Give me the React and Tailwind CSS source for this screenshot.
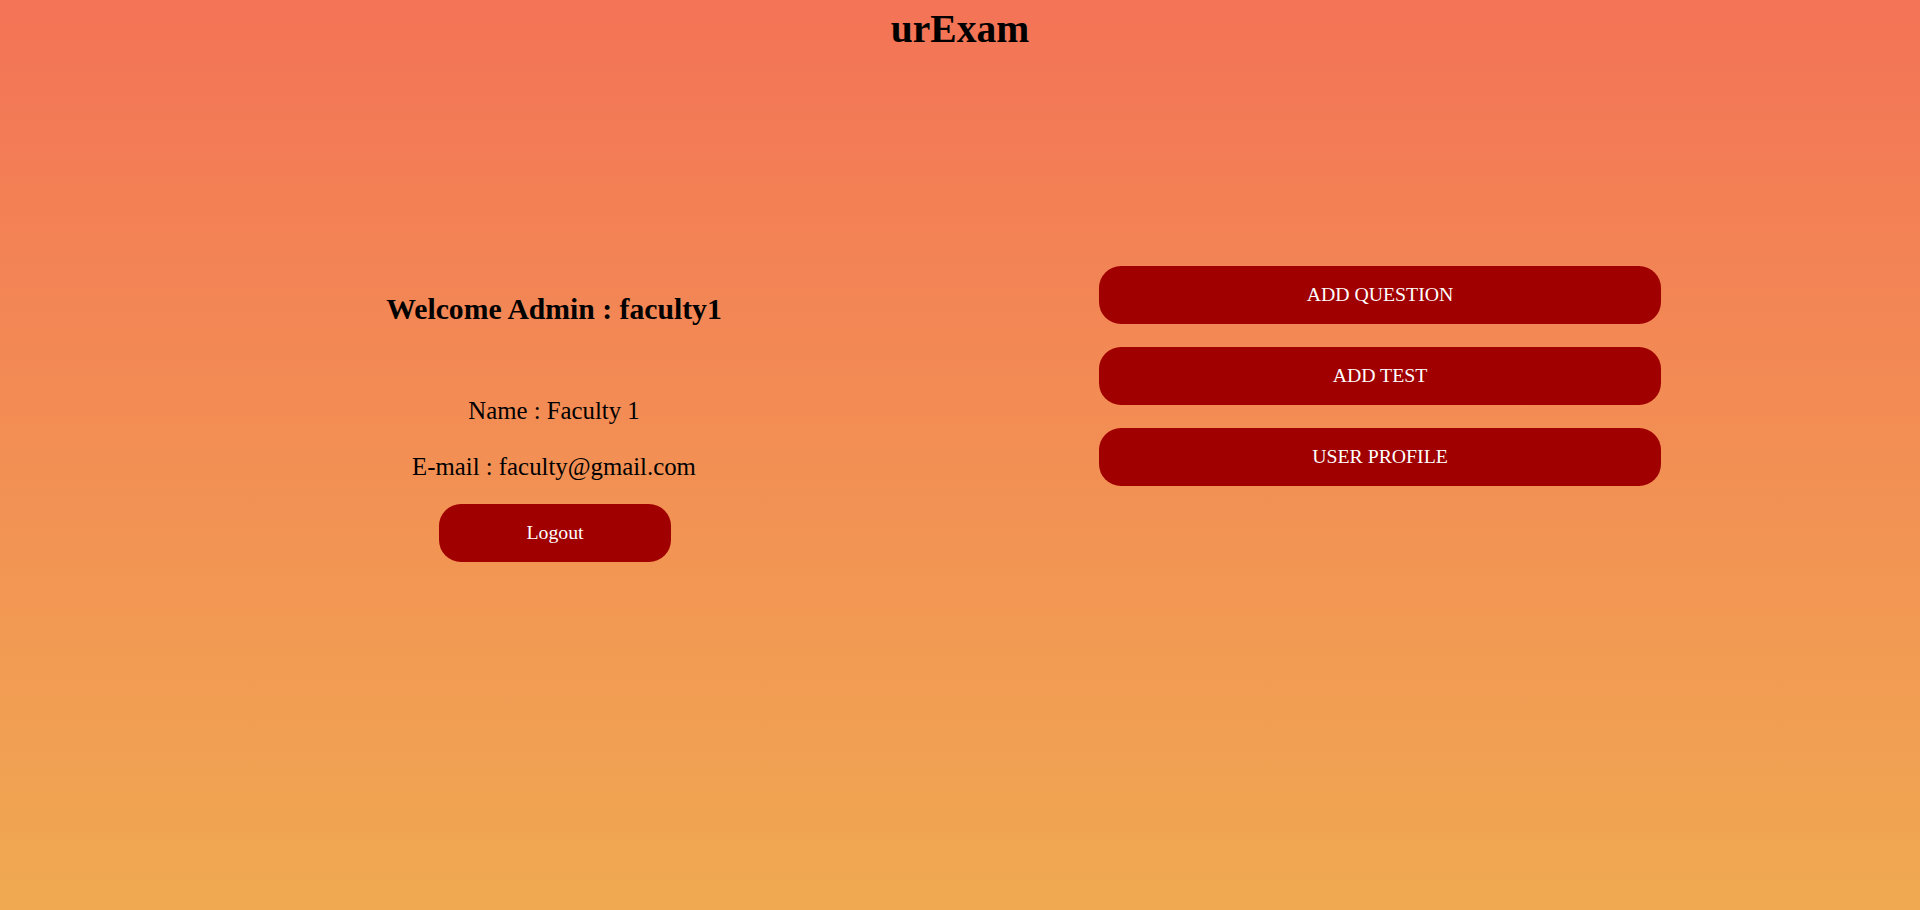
const ACTIONS = ['ADD QUESTION', 'ADD TEST', 'USER PROFILE'];

function PillButton({ children, className = '' }) {
  return (
    <button
      className={`bg-[#a00000] text-white text-[19.8px] leading-none rounded-[22px] h-[58px] ${className}`}
    >
      {children}
    </button>
  );
}

export default function App() {
  return (
    <div
      className="min-h-screen bg-linear-to-b from-[#f37356] to-[#f0a951] text-black"
      style={{ fontFamily: '"Liberation Serif", "Times New Roman", serif' }}
    >
      <h1 className="text-center text-[39.6px] font-bold leading-[43px] pt-[8px]">urExam</h1>

      <div className="flex justify-center items-start pl-[14px]">
        {/* left: account info */}
        <div className="w-[826px] flex flex-col items-center pt-[242px]">
          <h2 className="text-[29.7px] font-bold leading-[32.5px]">Welcome Admin : faculty1</h2>
          <p className="text-[24.8px] leading-[27px] mt-[71px]">Name : Faculty 1</p>
          <p className="text-[24.8px] leading-[27px] mt-[29px]">E-mail : faculty@gmail.com</p>
          <PillButton className="w-[232px] mt-[24px] ml-[2px]">Logout</PillButton>
        </div>

        {/* right: admin actions */}
        <div className="w-[826px] flex flex-col items-center gap-[23px] pt-[215px]">
          {ACTIONS.map(a => (
            <PillButton key={a} className="w-[562px]">{a}</PillButton>
          ))}
        </div>
      </div>
    </div>
  );
}
